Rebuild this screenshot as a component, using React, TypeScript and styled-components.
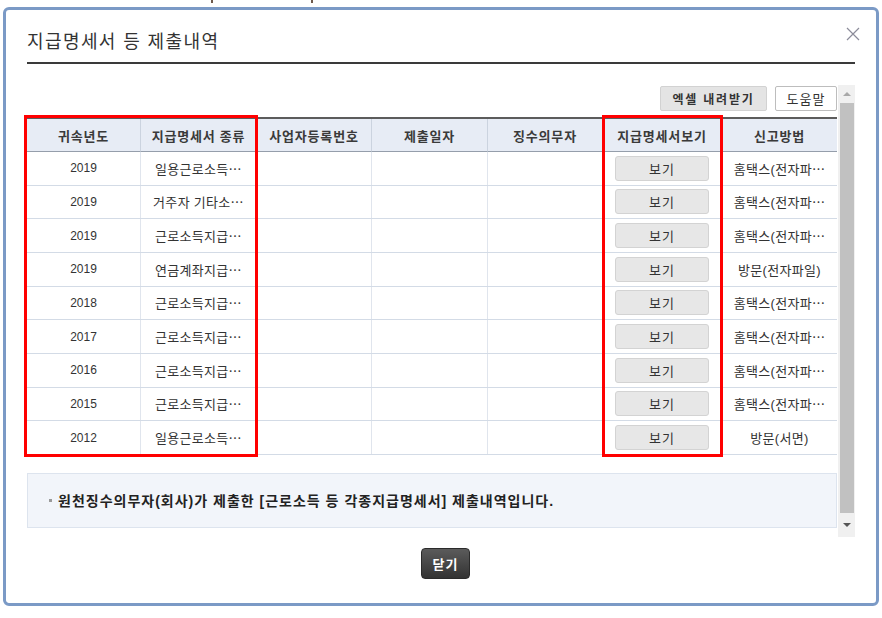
import React from "react";
import styled, { createGlobalStyle } from "styled-components";

const GlobalStyle = createGlobalStyle`
  html, body {
    margin: 0;
    padding: 0;
    background: #fff;
  }
  body {
    font-family: "Liberation Sans", "Noto Sans CJK KR", sans-serif;
    color: #333;
  }
`;

const Page = styled.div`
  width: 882px;
  height: 618px;
  box-sizing: border-box;
  padding: 0 3px;
  overflow: hidden;
`;

const BackStrip = styled.div`
  height: 7px;
  display: flex;
  padding-left: 208px;
`;

const BackMark = styled.span<{ $gap?: number }>`
  width: 2px;
  height: 3px;
  margin-left: ${(p) => p.$gap || 0}px;
  background: #6f5a4c;
`;

const Window = styled.div`
  height: 599px;
  box-sizing: border-box;
  border: 3px solid #7b9ac6;
  border-radius: 6px;
  padding: 0 21px;
  display: flex;
  flex-direction: column;
`;

const TitleBar = styled.div`
  height: 52px;
  box-sizing: border-box;
  padding-top: 8px;
  display: flex;
  align-items: center;
  justify-content: space-between;
`;

const Title = styled.h2`
  margin: 0;
  font-size: 18px;
  font-weight: 400;
  letter-spacing: 1.4px;
  color: #333;
`;

const CloseX = styled.button`
  align-self: flex-start;
  margin: 9px -5px 0 0;
  padding: 0;
  width: 14px;
  height: 14px;
  border: none;
  background: none;
  display: flex;
`;

const Divider = styled.div`
  height: 2px;
  background: #3a3a3a;
`;

const ScrollArea = styled.div`
  margin-top: 21px;
  height: 452px;
  display: flex;
  gap: 1px;
`;

const ScrollContent = styled.div`
  width: 810px;
  display: flex;
  flex-direction: column;
`;

const Toolbar = styled.div`
  margin-top: 1px;
  display: flex;
  justify-content: flex-end;
  gap: 8px;
`;

const ToolButton = styled.button<{ $light?: boolean }>`
  height: 25px;
  padding: 0;
  width: ${(p) => (p.$light ? 62 : 107)}px;
  box-sizing: border-box;
  border: 1px solid ${(p) => (p.$light ? "#bdbdbd" : "#d2d2d2")};
  border-radius: 2px;
  background: ${(p) => (p.$light ? "#fff" : "#e4e4e4")};
  font-family: inherit;
  font-size: ${(p) => (p.$light ? 13 : 12)}px;
  font-weight: ${(p) => (p.$light ? 400 : 700)};
  letter-spacing: ${(p) => (p.$light ? 1 : 1.8)}px;
  color: #333;
`;

const TableWrap = styled.div`
  position: relative;
  margin-top: 6px;
`;

const COLS = "114px 116px 115px 116px 115px 119px 115px";

const HeadRow = styled.div`
  display: grid;
  grid-template-columns: ${COLS};
  border-top: 2px solid #5c5c5c;
  background: #e7ecf5;
`;

const HeadCell = styled.div`
  height: 33px;
  box-sizing: border-box;
  border-bottom: 1px solid #959eab;
  border-right: 1px solid #cbd3df;
  display: flex;
  align-items: center;
  justify-content: center;
  font-size: 13px;
  font-weight: 700;
  letter-spacing: 0.8px;
  color: #3a3a3a;
  white-space: nowrap;
  &:last-child {
    border-right: none;
  }
`;

const Row = styled.div`
  display: grid;
  grid-template-columns: ${COLS};
  height: 33.67px;
  box-sizing: border-box;
  border-bottom: 1px solid #d3dbe6;
`;

const Cell = styled.div<{ $num?: boolean }>`
  border-right: 1px solid #e0e5ed;
  display: flex;
  align-items: center;
  justify-content: center;
  font-size: ${(p) => (p.$num ? 12 : 13)}px;
  letter-spacing: ${(p) => (p.$num ? 0 : 0.3)}px;
  color: #333;
  white-space: nowrap;
  overflow: hidden;
  &:last-child {
    border-right: none;
  }
`;

const ViewButton = styled.button`
  width: 94px;
  height: 25px;
  padding: 0;
  box-sizing: border-box;
  border: 1px solid #d3d3d3;
  border-radius: 3px;
  background: #e7e7e7;
  font-family: inherit;
  font-size: 13px;
  letter-spacing: 1px;
  color: #333;
`;

const Highlight = styled.div<{ $left: number; $width: number }>`
  position: absolute;
  top: -2px;
  bottom: -2px;
  left: ${(p) => p.$left}px;
  width: ${(p) => p.$width}px;
  box-sizing: border-box;
  border: 3px solid #ff0000;
  pointer-events: none;
`;

const Notice = styled.div`
  margin-top: 18px;
  height: 55px;
  box-sizing: border-box;
  border: 1px solid #dde4ee;
  background: #f2f5fa;
  display: flex;
  align-items: center;
  padding-left: 21px;
  gap: 6px;
  font-size: 14px;
  font-weight: 700;
  letter-spacing: 1px;
  color: #222;
`;

const Bullet = styled.span`
  width: 3px;
  height: 3px;
  background: #9a9a9a;
`;

const Scrollbar = styled.div`
  width: 17px;
  background: #f0f0f0;
  display: flex;
  flex-direction: column;
`;

const ArrowBox = styled.div<{ $grow?: boolean }>`
  height: 17px;
  flex: ${(p) => (p.$grow ? 1 : "none")};
  display: flex;
  align-items: center;
  justify-content: center;
`;

const Arrow = styled.span<{ $down?: boolean }>`
  width: 0;
  height: 0;
  border-left: 4px solid transparent;
  border-right: 4px solid transparent;
  ${(p) =>
    p.$down
      ? "border-top: 4px solid #555;"
      : "border-bottom: 4px solid #a8a8a8;"}
`;

const Thumb = styled.div`
  height: 410px;
  margin: 1px 1px 0 2px;
  background: #c1c1c1;
`;

const Footer = styled.div`
  margin-top: 11px;
  padding-left: 9px;
  display: flex;
  justify-content: center;
`;

const CloseButton = styled.button`
  width: 49px;
  height: 31px;
  padding: 0;
  border: 1px solid #2b2b2b;
  border-radius: 4px;
  background: linear-gradient(#5b5b5b, #333);
  font-family: inherit;
  font-size: 13px;
  font-weight: 700;
  letter-spacing: 1px;
  color: #fff;
`;

const headers = [
  "귀속년도",
  "지급명세서 종류",
  "사업자등록번호",
  "제출일자",
  "징수의무자",
  "지급명세서보기",
  "신고방법",
];

const rows = [
  { year: "2019", kind: "일용근로소득⋯", method: "홈택스(전자파⋯" },
  { year: "2019", kind: "거주자 기타소⋯", method: "홈택스(전자파⋯" },
  { year: "2019", kind: "근로소득지급⋯", method: "홈택스(전자파⋯" },
  { year: "2019", kind: "연금계좌지급⋯", method: "방문(전자파일)" },
  { year: "2018", kind: "근로소득지급⋯", method: "홈택스(전자파⋯" },
  { year: "2017", kind: "근로소득지급⋯", method: "홈택스(전자파⋯" },
  { year: "2016", kind: "근로소득지급⋯", method: "홈택스(전자파⋯" },
  { year: "2015", kind: "근로소득지급⋯", method: "홈택스(전자파⋯" },
  { year: "2012", kind: "일용근로소득⋯", method: "방문(서면)" },
];

export default function App() {
  return (
    <Page>
      <GlobalStyle />
      <BackStrip>
        <BackMark />
        <BackMark $gap={98} />
      </BackStrip>
      <Window>
        <TitleBar>
          <Title>지급명세서 등 제출내역</Title>
          <CloseX aria-label="닫기">
            <svg width="14" height="14" viewBox="0 0 14 14">
              <path d="M1 1 L13 13 M13 1 L1 13" stroke="#8c8c9a" strokeWidth="1.2" fill="none" />
            </svg>
          </CloseX>
        </TitleBar>
        <Divider />
        <ScrollArea>
          <ScrollContent>
            <Toolbar>
              <ToolButton>엑셀 내려받기</ToolButton>
              <ToolButton $light>도움말</ToolButton>
            </Toolbar>
            <TableWrap>
              <HeadRow>
                {headers.map((h) => (
                  <HeadCell key={h}>{h}</HeadCell>
                ))}
              </HeadRow>
              {rows.map((r, i) => (
                <Row key={i}>
                  <Cell $num>{r.year}</Cell>
                  <Cell>{r.kind}</Cell>
                  <Cell />
                  <Cell />
                  <Cell />
                  <Cell>
                    <ViewButton>보기</ViewButton>
                  </Cell>
                  <Cell>{r.method}</Cell>
                </Row>
              ))}
              <Highlight $left={-3} $width={234} />
              <Highlight $left={575} $width={121} />
            </TableWrap>
            <Notice>
              <Bullet />
              원천징수의무자(회사)가 제출한 [근로소득 등 각종지급명세서] 제출내역입니다.
            </Notice>
          </ScrollContent>
          <Scrollbar>
            <ArrowBox>
              <Arrow />
            </ArrowBox>
            <Thumb />
            <ArrowBox $grow>
              <Arrow $down />
            </ArrowBox>
          </Scrollbar>
        </ScrollArea>
        <Footer>
          <CloseButton>닫기</CloseButton>
        </Footer>
      </Window>
    </Page>
  );
}
